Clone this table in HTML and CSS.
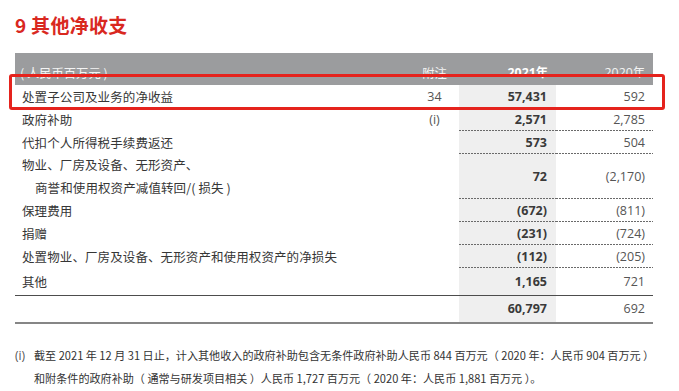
FILE: index.html
```html
<!DOCTYPE html>
<html lang="zh-CN">
<head>
<meta charset="utf-8">
<title>9 其他净收支</title>
<link rel="stylesheet" href="styles.css">
</head>
<body>
<div class="page">
  <h1 class="title">9 其他净收支</h1>
  <table class="fin">
    <colgroup>
      <col class="c-label">
      <col class="c-note">
      <col class="c-cur">
      <col class="c-prev">
    </colgroup>
    <thead>
      <tr class="head">
        <th class="label">( 人民币百万元 )</th>
        <th class="note">附注</th>
        <th class="cur">2021年</th>
        <th class="prev">2020年</th>
      </tr>
    </thead>
    <tbody>
      <tr class="row">
        <td class="label">处置子公司及业务的净收益</td>
        <td class="note">34</td>
        <td class="cur dash">57,431</td>
        <td class="prev dash">592</td>
      </tr>
      <tr class="row">
        <td class="label">政府补助</td>
        <td class="note">(i)</td>
        <td class="cur dash">2,571</td>
        <td class="prev dash">2,785</td>
      </tr>
      <tr class="row">
        <td class="label">代扣个人所得税手续费返还</td>
        <td class="note"></td>
        <td class="cur dash">573</td>
        <td class="prev dash">504</td>
      </tr>
      <tr class="row tall">
        <td class="label hang">物业、厂房及设备、无形资产、<br>商誉和使用权资产减值转回/( 损失 )</td>
        <td class="note"></td>
        <td class="cur dash">72</td>
        <td class="prev dash">(2,170)</td>
      </tr>
      <tr class="row">
        <td class="label">保理费用</td>
        <td class="note"></td>
        <td class="cur dash">(672)</td>
        <td class="prev dash">(811)</td>
      </tr>
      <tr class="row">
        <td class="label">捐赠</td>
        <td class="note"></td>
        <td class="cur dash">(231)</td>
        <td class="prev dash">(724)</td>
      </tr>
      <tr class="row">
        <td class="label">处置物业、厂房及设备、无形资产和使用权资产的净损失</td>
        <td class="note"></td>
        <td class="cur dash">(112)</td>
        <td class="prev dash">(205)</td>
      </tr>
      <tr class="row last">
        <td class="label">其他</td>
        <td class="note"></td>
        <td class="cur">1,165</td>
        <td class="prev">721</td>
      </tr>
      <tr class="row total">
        <td class="label"></td>
        <td class="note"></td>
        <td class="cur">60,797</td>
        <td class="prev">692</td>
      </tr>
    </tbody>
  </table>
  <div class="footnote">
    <span class="fn-mark">(i)</span>
    <p class="fn-text">截至 2021 年 12 月 31 日止，计入其他收入的政府补助包含无条件政府补助人民币 844 百万元（ 2020 年：人民币 904 百万元 ）<br>和附条件的政府补助（ 通常与研发项目相关 ）人民币 1,727 百万元（ 2020 年：人民币 1,881 百万元 ）。</p>
  </div>
  <div class="highlight-box"></div>
</div>
</body>
</html>
```

FILE: styles.css
```css
html, body {
  margin: 0;
  padding: 0;
  background: #ffffff;
}

body {
  font-family: "Noto Sans CJK SC", "Noto Sans", sans-serif;
  color: #363636;
}

.page {
  position: relative;
  width: 679px;
  height: 391px;
  padding-left: 15px;
  box-sizing: border-box;
  overflow: hidden;
}

.title {
  margin: 0;
  height: 53px;
  box-sizing: border-box;
  padding-top: 12px;
  font-size: 19px;
  line-height: 26px;
  font-weight: 700;
  color: #d9281f;
  letter-spacing: 0.3px;
}

.fin {
  width: 638px;
  table-layout: fixed;
  border-collapse: separate;
  border-spacing: 0;
}

.c-label { width: 395px; }
.c-note { width: 49px; }
.c-cur { width: 97px; }
.c-prev { width: 97px; }

.fin th,
.fin td {
  padding: 0;
  white-space: nowrap;
}

.head th {
  height: 32px;
  box-sizing: border-box;
  padding-top: 7px;
  background: #9b9c9e;
  color: #f4f4f4;
  font-weight: 400;
  font-size: 12.3px;
  line-height: 20px;
}

.head .label {
  text-align: left;
  padding-left: 5px;
}

.head .note {
  text-align: center;
}

.head .cur {
  text-align: right;
  padding-right: 8px;
  font-family: "Open Sans", "Noto Sans CJK SC", sans-serif;
  font-weight: 700;
  color: #ffffff;
}

.head .prev {
  text-align: right;
  padding-right: 8px;
  font-family: "Open Sans", "Noto Sans CJK SC", sans-serif;
  font-weight: 400;
  color: #f4f4f4;
}

.row td {
  height: 23px;
  line-height: 22px;
  vertical-align: middle;
}

.row.tall td {
  height: 45px;
}

.row.last td {
  height: 27px;
}

.row.total td {
  height: 26px;
  border-top: 1px solid #4d4d4d;
  border-bottom: 2px solid #868686;
}

.row .label {
  padding-left: 7px;
  font-size: 12.5px;
  letter-spacing: 0.1px;
  color: #363636;
}

.row .label.hang {
  padding-left: 20px;
  text-indent: -13px;
  line-height: 22.5px;
}

.row .note {
  text-align: center;
  font-family: "Open Sans", sans-serif;
  font-weight: 400;
  font-size: 12.5px;
  color: #555555;
}

.row .cur {
  text-align: right;
  padding-right: 9px;
  background-color: #efefef;
  font-family: "Open Sans", sans-serif;
  font-weight: 700;
  font-size: 12.5px;
  color: #3a3a3a;
}

.row .prev {
  text-align: right;
  padding-right: 8px;
  font-family: "Open Sans", sans-serif;
  font-weight: 400;
  font-size: 12.5px;
  color: #555555;
}

.row .dash {
  background-image: linear-gradient(to right, #6a6a6a 2px, transparent 2px);
  background-size: 3px 1px;
  background-repeat: repeat-x;
  background-position: left bottom;
}

.footnote {
  display: flex;
  margin-top: 20px;
  font-size: 11.1px;
  line-height: 23px;
  color: #333333;
}

.fn-mark {
  width: 19px;
  flex: none;
  font-family: "Open Sans", sans-serif;
  font-weight: 400;
  font-size: 12px;
  color: #555555;
}

.fn-text {
  margin: 0;
  white-space: nowrap;
}

.highlight-box {
  position: absolute;
  left: 9px;
  top: 74px;
  width: 656px;
  height: 36px;
  box-sizing: border-box;
  border: 3px solid #e5231d;
  border-radius: 3px;
}
```
